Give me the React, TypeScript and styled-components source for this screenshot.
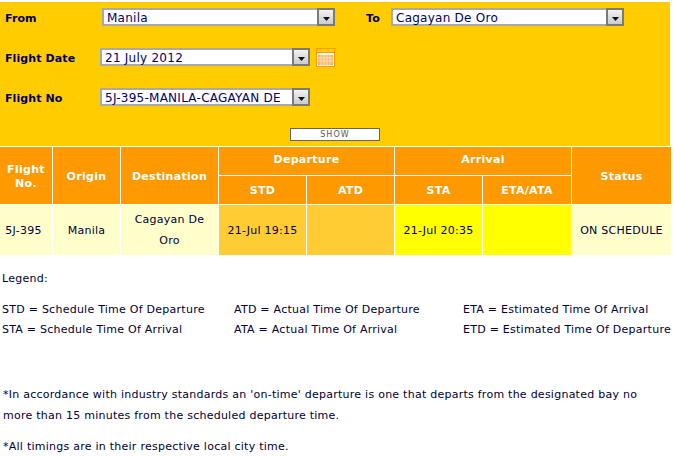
import React from "react";
import styled, { createGlobalStyle } from "styled-components";

const Global = createGlobalStyle`
  html, body { margin: 0; padding: 0; background: #fff; }
  body { font-family: "DejaVu Sans", Verdana, sans-serif; font-size: 11px; color: #000033; letter-spacing: 0.25px; }
`;
const Page = styled.div`width: 674px; height: 457px; overflow: hidden; padding-top: 2px; box-sizing: border-box;`;
const Panel = styled.form`
  width: 670px; height: 144px; background: #ffcc00; box-sizing: border-box;
  padding-top: 6px; display: flex; flex-direction: column;
`;
const Row = styled.div`display: flex; align-items: center; height: 18px; margin-bottom: 22px; padding-left: 5px;`;
const Label = styled.label<{ $w: number; $gap?: number }>`
  width: ${p => p.$w}px; margin-left: ${p => p.$gap ?? 0}px; font-weight: bold; color: #000066; font-size: 11px;
  flex: none; letter-spacing: 0.1px; padding-top: 2px; box-sizing: border-box;
`;
const Select = styled.div<{ $w: number }>`
  width: ${p => p.$w}px; height: 18px; box-sizing: border-box; border: 2px solid #a9a9a9; background: #fff;
  display: flex; align-items: center; justify-content: space-between;
  flex: none; padding-left: 3px; font-size: 12px; color: #000066; letter-spacing: 0.25px; white-space: nowrap;
`;
const SelectText = styled.span`padding-top: 2px;`;
const Arrow = styled.span`
  width: 18px; height: 18px; box-sizing: border-box; border: 2px solid #7a7a7a; flex: none; margin: -2px -2px -2px 0;
  background: linear-gradient(#f2f2f2, #cccccc); display: flex; align-items: center; justify-content: center;
  svg { display: block; margin-top: 3px; }
`;
const Cal = styled.svg`margin-left: 6px; flex: none; display: block;`;
const ShowRow = styled.div`display: flex; padding-left: 290px;`;
const ShowBtn = styled.button`
  width: 90px; height: 13px; box-sizing: border-box; border: 1px solid #666; background: #fff; padding: 1px 0 0;
  font: 8px "DejaVu Sans", sans-serif; color: #555; letter-spacing: 1.1px; line-height: 10px;
`;
const Table = styled.table`
  width: 671px; border-collapse: separate; border-spacing: 0; table-layout: fixed;
`;
const Th = styled.th<{ $first?: boolean; $pt?: number; $pb?: number; $h: number }>`
  background: #ff9900; color: #fff; font-size: 11px; font-weight: bold; text-align: center;
  padding: ${p => p.$pt ?? 0}px 0 ${p => p.$pb ?? 0}px;
  border-top: 1px solid #fff; border-left: ${p => (p.$first ? "0" : "1px solid #fff")}; letter-spacing: 0.3px;
  height: ${p => p.$h}px; line-height: 14px; box-sizing: content-box;
`;
const Td = styled.td<{ $bg: string; $first?: boolean }>`
  background: ${p => p.$bg}; color: #000033; font-size: 11px; text-align: center; padding: 0 10px;
  border-top: 1px solid #fff; border-left: ${p => (p.$first ? "0" : "1px solid #fff")};
  height: 51px; line-height: 21px; box-sizing: border-box; white-space: normal;
`;
const NarrowTd = styled(Td)`padding: 0;`;
const FlightTd = styled(Td)`padding: 0 5px 0 0;`;
const Legend = styled.section`padding: 14px 0 0 2px; line-height: 20px;`;
const LegendGrid = styled.div`
  display: grid; grid-template-columns: 232px 229px auto; margin-top: 11px; white-space: nowrap;
`;
const Notes = styled.div`margin-top: 44px; padding-left: 1px; line-height: 21px;`;
const Note = styled.p`margin: 0 0 10px; width: 660px;`;

const Dd = () => (
  <Arrow>
    <svg width="7" height="4" viewBox="0 0 7 4"><path d="M0 0h7L3.5 4z" fill="#111" /></svg>
  </Arrow>
);

export default function App() {
  return (
    <Page>
      <Global />
      <Panel>
        <Row>
          <Label $w={97}>From</Label>
          <Select $w={233}><SelectText>Manila</SelectText><Dd /></Select>
          <Label $w={25} $gap={31}>To</Label>
          <Select $w={233}><SelectText>Cagayan De Oro</SelectText><Dd /></Select>
        </Row>
        <Row>
          <Label $w={95}>Flight Date</Label>
          <Select $w={210}><SelectText>21 July 2012</SelectText><Dd /></Select>
          <Cal width="19" height="19" viewBox="0 0 19 19">
            <rect x="0.5" y="0.5" width="18" height="18" fill="#ffffff" stroke="#ff9900" />
            <rect x="1" y="1" width="17" height="3" fill="#ffcc00" />
            <rect x="1" y="4" width="17" height="1" fill="#ff9900" />
            <rect x="2" y="7" width="15" height="10" fill="#ffb366" />
            <path d="M5 7v10M8 7v10M11 7v10M14 7v10M2 10h15M2 13h15" stroke="#ffe3bd" strokeWidth="1" />
          </Cal>
        </Row>
        <Row>
          <Label $w={95}>Flight No</Label>
          <Select $w={210}><SelectText>5J-395-MANILA-CAGAYAN DE</SelectText><Dd /></Select>
        </Row>
        <ShowRow><ShowBtn type="button">SHOW</ShowBtn></ShowRow>
      </Panel>
      <Table>
        <colgroup>
          {[52, 68, 98, 88, 88, 88, 89, 100].map((w, i) => <col key={i} style={{ width: w }} />)}
        </colgroup>
        <thead>
          <tr>
            <Th $first rowSpan={2} $h={54} $pt={2}>Flight<br />No.</Th>
            <Th rowSpan={2} $h={54} $pt={2}>Origin</Th>
            <Th rowSpan={2} $h={54} $pt={2}>Destination</Th>
            <Th colSpan={2} $h={25} $pb={3}>Departure</Th>
            <Th colSpan={2} $h={25} $pb={3}>Arrival</Th>
            <Th rowSpan={2} $h={54} $pt={2}>Status</Th>
          </tr>
          <tr>
            <Th $h={26} $pt={2}>STD</Th><Th $h={26} $pt={2}>ATD</Th><Th $h={26} $pt={2}>STA</Th><Th $h={26} $pt={2}>ETA/ATA</Th>
          </tr>
        </thead>
        <tbody>
          <tr>
            <FlightTd $first $bg="#ffffcc">5J-395</FlightTd>
            <NarrowTd $bg="#ffffcc">Manila</NarrowTd>
            <Td $bg="#ffffcc">Cagayan De Oro</Td>
            <NarrowTd $bg="#ffcc33">21-Jul 19:15</NarrowTd>
            <NarrowTd $bg="#ffcc33"></NarrowTd>
            <NarrowTd $bg="#ffff00">21-Jul 20:35</NarrowTd>
            <NarrowTd $bg="#ffff00"></NarrowTd>
            <NarrowTd $bg="#ffffcc">ON SCHEDULE</NarrowTd>
          </tr>
        </tbody>
      </Table>
      <Legend>
        <div>Legend:</div>
        <LegendGrid>
          <span>STD = Schedule Time Of Departure</span>
          <span>ATD = Actual Time Of Departure</span>
          <span>ETA = Estimated Time Of Arrival</span>
          <span>STA = Schedule Time Of Arrival</span>
          <span>ATA = Actual Time Of Arrival</span>
          <span>ETD = Estimated Time Of Departure</span>
        </LegendGrid>
        <Notes>
          <Note>*In accordance with industry standards an 'on-time' departure is one that departs from the designated bay no more than 15 minutes from the scheduled departure time.</Note>
          <Note>*All timings are in their respective local city time.</Note>
        </Notes>
      </Legend>
    </Page>
  );
}
